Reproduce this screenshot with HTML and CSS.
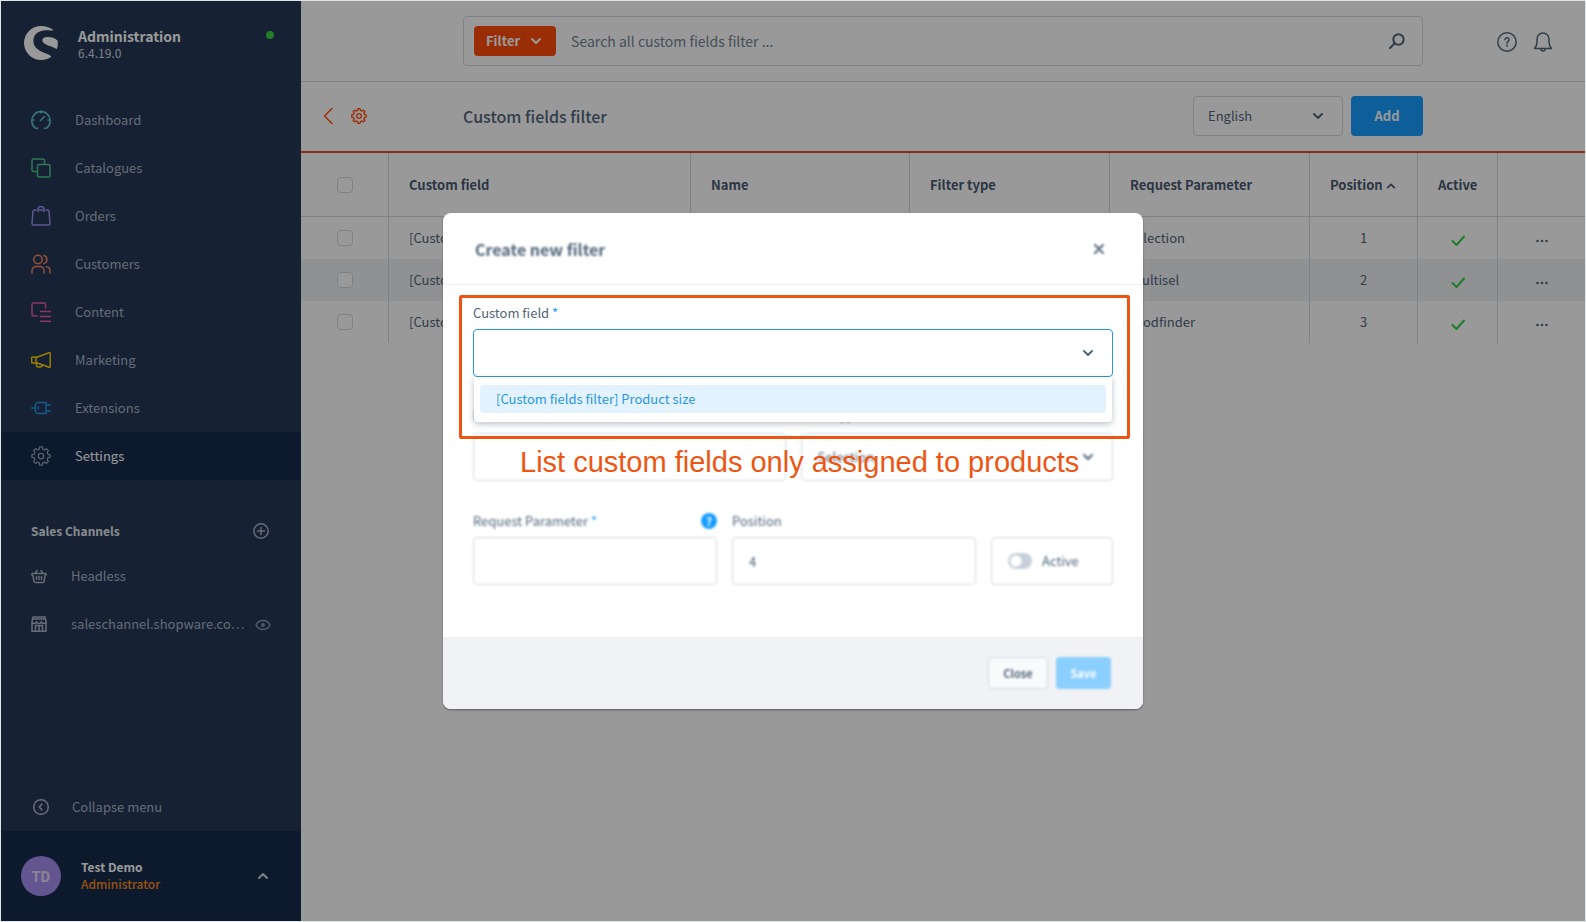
FILE: index.html
```
<!DOCTYPE html>
<html lang="en">
<head>
<meta charset="utf-8">
<title>Custom fields filter | Administration</title>
<link rel="stylesheet" href="styles.css">
</head>
<body>
<div class="app">
  <aside class="sidebar">
    <div class="brand">
      <svg class="brand-logo" viewBox="0 0 102 102" fill="currentColor"><path d="M88 12C78 4 64 0 51 0a51 51 0 0 0 0 102c12 0 22-3 30-9 2-2-3-5-9-8C52 77 28 68 28 45 28 22 50 12 66 13c9 0 20 2 22-1z"/><path d="M101 44c-9-10-23-12-33-11-10 1-14 6-13 12 3 12 29 15 42 24 4 1 5-17 4-25z"/></svg>
      <div class="brand-text"><strong class="brand-name">Administration</strong><span class="brand-version">6.4.19.0</span></div>
      <span class="status-dot"></span>
    </div>
    <nav class="nav">
      <a class="nav-item" href="#"><svg class="icon c-cyan" viewBox="0 0 20 20"><path d="M6.500 18.300H4.700A9.200 9.200 0 1 1 15.300 18.300H13.500M10 1v2M1 10h2M17 10h2M9.500 10.500L13.500 6.500"/></svg>Dashboard</a>
      <a class="nav-item" href="#"><svg class="icon c-green" viewBox="0 0 20 20"><path d="M6 13.500H2.500a1.500 1.500 0 0 1-1.500-1.500V2.500A1.500 1.500 0 0 1 2.500 1H12a1.500 1.500 0 0 1 1.500 1.500V6"/><rect x="6.500" y="6.500" width="12.500" height="12.500" rx="1.500"/></svg>Catalogues</a>
      <a class="nav-item" href="#"><svg class="icon c-purple" viewBox="0 0 20 20"><path d="M5 4H3.500a1.500 1.500 0 0 0-1.500 1.500L1 17.500A1.500 1.500 0 0 0 2.500 19h15a1.500 1.500 0 0 0 1.500-1.500L18 5.500A1.500 1.500 0 0 0 16.500 4H15M8.500 4h3M7 5.500V3.500a3 3 0 0 1 6 0v2"/></svg>Orders</a>
      <a class="nav-item" href="#"><svg class="icon c-coral" viewBox="0 0 20 20"><circle cx="7" cy="5.500" r="4.200"/><path d="M1 19v-2.500a4 4 0 0 1 4-4h4a4 4 0 0 1 4 4V19M13 1.500a4.200 4.200 0 0 1 0 8M15.500 12.700a4 4 0 0 1 3.500 4V19"/></svg>Customers</a>
      <a class="nav-item" href="#"><svg class="icon c-pink" viewBox="0 0 20 20"><path d="M6 14H2.500A1.500 1.500 0 0 1 1 12.500v-10A1.500 1.500 0 0 1 2.500 1H13a1.500 1.500 0 0 1 1.500 1.500V6M9.500 9.500H20M9.500 14.500H20M9.500 19.300H20"/></svg>Content</a>
      <a class="nav-item" href="#"><svg class="icon c-yellow" viewBox="0 0 20 20"><path d="M1.500 7H5v6H1.500a.8.8 0 0 1-.8-.8V7.800a.8.800 0 0 1 .8-.8zM5 7.500l13-4.800a1 1 0 0 1 1.300 1v12.600a1 1 0 0 1-1.300 1L5 12.500M5.500 13.300v1.700a2 2 0 0 0 2 2h1.500a2 2 0 0 0 2-2"/></svg>Marketing</a>
      <a class="nav-item" href="#"><svg class="icon c-blue" viewBox="0 0 20 20"><path d="M0 10h4.500M7 4.500h8V15.500H7A2.500 2.500 0 0 1 4.500 13V7A2.500 2.500 0 0 1 7 4.500zM15 7h4.500M15 13h4.500M7.500 9v2"/></svg>Extensions</a>
      <a class="nav-item nav-item-active" href="#"><svg class="icon c-gray" viewBox="-12 -12 24 24"><path d="M-2.060-8.250L-1.720-10.860H1.720L2.060-8.250 4.380-7.290 6.460-8.890 8.890-6.460 7.290-4.380 8.250-2.060 10.860-1.720V1.720L8.250 2.060 7.290 4.380 8.890 6.460 6.460 8.890 4.380 7.290 2.060 8.250 1.720 10.860H-1.720L-2.060 8.250-4.380 7.290-6.460 8.890-8.890 6.460-7.290 4.380-8.250 2.060-10.860 1.720V-1.720L-8.250-2.060-7.290-4.380-8.890-6.460-6.460-8.890-4.380-7.290z"/><circle r="3.300"/></svg>Settings</a>
    </nav>
    <section class="channels">
      <div class="channels-head"><h2 class="channels-title">Sales Channels</h2>
        <button class="icon-button" aria-label="Add sales channel"><svg class="icon-16" viewBox="0 0 16 16"><circle cx="8" cy="8" r="7.200"/><path d="M8 4.500v7M4.500 8h7"/></svg></button></div>
      <a class="channel" href="#"><svg class="icon-16" viewBox="0 0 16 16"><path d="M1 5.500h14M1 5.500v1.700l.9.500 1 5.600A1.500 1.500 0 0 0 4.400 14.500h7.200a1.500 1.500 0 0 0 1.500-1.200l1-5.600.9-.5V5.500M4 5.500L6 2.500M12 5.500L10 2.500M5.500 8.500v3M8 8.500v3M10.500 8.500v3"/></svg><span class="channel-name">Headless</span></a>
      <a class="channel" href="#"><svg class="icon-16" viewBox="0 0 16 16"><path d="M1 5.500L2 1h12l1 4.500M1 5.500a2.300 2 0 0 0 4.600 0 2.400 2 0 0 0 4.800 0 2.300 2 0 0 0 4.600 0M1 5.500V15.300h14V5.500M4.500 15V9.500h7V15M8 9.500V15M2 3h12"/></svg><span class="channel-name">saleschannel.shopware.co…</span><svg class="icon-16 c-dim" viewBox="0 0 16 16"><path d="M1 9c3-6 11-6 14 0-3 6-11 6-14 0z"/><circle cx="8" cy="9" r="1.200"/></svg></a>
    </section>
    <button class="collapse"><svg class="icon-16" viewBox="0 0 16 16"><circle cx="8" cy="8" r="7.300"/><path d="M9 5L6.300 8 9 11"/></svg>Collapse menu</button>
    <button class="user">
      <span class="avatar">TD</span>
      <span class="user-text"><strong class="user-name">Test Demo</strong><span class="user-role">Administrator</span></span>
      <svg class="chevron c-light" viewBox="0 0 12 12"><path d="M2 8l4-4 4 4"/></svg>
    </button>
  </aside>
  <main class="main">
    <header class="topbar">
      <div class="search">
        <button class="filter-button">Filter<svg class="chevron" viewBox="0 0 12 12"><path d="M2 4l4 4 4-4"/></svg></button>
        <input class="search-input" type="search" aria-label="Search" placeholder="Search all custom fields filter ...">
        <svg class="search-icon" viewBox="0 0 16 16"><circle cx="9.500" cy="6.500" r="5.200"/><path d="M5.800 10.200L1 15"/></svg>
      </div>
      <div class="top-actions">
        <button class="icon-button" aria-label="Help"><svg class="icon-20" viewBox="0 0 20 20"><circle cx="10" cy="10" r="9.200"/><path d="M8 7.800a2 2 0 1 1 3 1.700c-.7.4-1 .8-1 1.700M10 13v1.200"/></svg></button>
        <button class="icon-button" aria-label="Notifications"><svg class="icon-20" viewBox="0 0 20 20"><path d="M1.500 16.500C3 15 4 13 4 10V7a6 6 0 0 1 12 0v3c0 3 1 5 2.500 6.500zM8 17a2 2 0 0 0 4 0"/></svg></button>
      </div>
    </header>
    <div class="pagebar">
      <div class="page-nav">
        <a class="page-link" href="#" aria-label="Back"><svg class="icon-16" viewBox="0 0 16 16"><path d="M11 .5L3.500 8l7.500 7.500"/></svg></a>
        <a class="page-link" href="#" aria-label="Settings"><svg class="icon-16 gear-small" viewBox="-12 -12 24 24"><path d="M-2.060-8.250L-1.720-10.860H1.720L2.060-8.250 4.380-7.290 6.460-8.890 8.890-6.460 7.290-4.380 8.250-2.060 10.860-1.720V1.720L8.250 2.060 7.290 4.380 8.890 6.460 6.460 8.890 4.380 7.290 2.060 8.250 1.720 10.860H-1.720L-2.060 8.250-4.380 7.290-6.460 8.890-8.890 6.460-7.290 4.380-8.250 2.060-10.860 1.720V-1.720L-8.250-2.060-7.290-4.380-8.890-6.460-6.460-8.890-4.380-7.290z"/><circle r="3.500"/></svg></a>
      </div>
      <div class="page-head">
        <h1 class="page-title">Custom fields filter</h1>
        <div class="lang"><select class="lang-select" aria-label="Language"><option>English</option></select><svg class="chevron" viewBox="0 0 12 12"><path d="M2 4l4 4 4-4"/></svg></div>
        <button class="add-button">Add</button>
      </div>
    </div>
    <table class="grid">
      <colgroup><col class="w-check"><col><col class="w-name"><col class="w-type"><col class="w-param"><col class="w-pos"><col class="w-active"><col class="w-menu"></colgroup>
      <thead><tr><th class="center"><input class="check" type="checkbox" aria-label="Select all"></th><th>Custom field</th><th>Name</th><th>Filter type</th><th>Request Parameter</th><th>Position<svg class="sort" viewBox="0 0 12 12"><path d="M2 8l4-4 4 4"/></svg></th><th>Active</th><th></th></tr></thead>
      <tbody>
        <tr><td class="center"><input class="check" type="checkbox" aria-label="Select row 1"></td><td>[Custom fields filter]</td><td></td><td></td><td>selection</td><td class="center">1</td><td class="center"><svg class="tick" viewBox="0 0 14 14"><path d="M1.500 8l4 4L13 3.500"/></svg></td><td class="center"><button class="icon-button" aria-label="Row menu"><svg class="dots" viewBox="0 0 12 4"><circle cx="1.500" cy="2" r="1.300"/><circle cx="6" cy="2" r="1.300"/><circle cx="10.500" cy="2" r="1.300"/></svg></button></td></tr>
        <tr><td class="center"><input class="check" type="checkbox" aria-label="Select row 2"></td><td>[Custom fields filter]</td><td></td><td></td><td>multisel</td><td class="center">2</td><td class="center"><svg class="tick" viewBox="0 0 14 14"><path d="M1.500 8l4 4L13 3.500"/></svg></td><td class="center"><button class="icon-button" aria-label="Row menu"><svg class="dots" viewBox="0 0 12 4"><circle cx="1.500" cy="2" r="1.300"/><circle cx="6" cy="2" r="1.300"/><circle cx="10.500" cy="2" r="1.300"/></svg></button></td></tr>
        <tr><td class="center"><input class="check" type="checkbox" aria-label="Select row 3"></td><td>[Custom fields filter]</td><td></td><td></td><td>prodfinder</td><td class="center">3</td><td class="center"><svg class="tick" viewBox="0 0 14 14"><path d="M1.500 8l4 4L13 3.500"/></svg></td><td class="center"><button class="icon-button" aria-label="Row menu"><svg class="dots" viewBox="0 0 12 4"><circle cx="1.500" cy="2" r="1.300"/><circle cx="6" cy="2" r="1.300"/><circle cx="10.500" cy="2" r="1.300"/></svg></button></td></tr>
      </tbody>
    </table>
  </main>
</div>
<div class="backdrop">
  <div class="modal" role="dialog" aria-labelledby="modal-title">
    <header class="modal-head">
      <h2 class="modal-title soft" id="modal-title">Create new filter</h2>
      <button class="icon-button soft" aria-label="Close dialog"><svg class="close-icon" viewBox="0 0 12 12"><path d="M2 2l8 8M10 2l-8 8"/></svg></button>
    </header>
    <div class="modal-body">
      <div class="field field-open">
        <label class="label" for="custom-field">Custom field <span class="required">*</span></label>
        <div class="combo combo-focus"><input class="combo-input" id="custom-field" type="text" role="combobox" aria-expanded="true"><svg class="chevron" viewBox="0 0 12 12"><path d="M2 4l4 4 4-4"/></svg></div>
        <ul class="options" role="listbox"><li class="option" role="option" aria-selected="true">[Custom fields filter] Product size</li></ul>
      </div>
      <div class="row-half soft">
        <div class="field"><label class="label" for="name">Name <span class="required">*</span></label><input class="input" id="name" type="text"></div>
        <div class="field"><label class="label" for="type">Filter type</label><div class="combo"><select class="combo-input" id="type"><option>Selection</option></select><svg class="chevron" viewBox="0 0 12 12"><path d="M2 4l4 4 4-4"/></svg></div></div>
      </div>
      <div class="row-third soft">
        <div class="field"><div class="label-line"><label class="label" for="param">Request Parameter <span class="required">*</span></label><span class="hint">?</span></div><input class="input" id="param" type="text"></div>
        <div class="field"><label class="label" for="position">Position</label><input class="input" id="position" type="text" value="4"></div>
        <label class="switch-box"><input class="switch" type="checkbox">Active</label>
      </div>
      <div class="highlight"></div>
      <p class="callout">List custom fields only assigned to products</p>
    </div>
    <footer class="modal-foot">
      <button class="close-button soft">Close</button>
      <button class="save-button soft">Save</button>
    </footer>
  </div>
</div>
</body>
</html>
```

FILE: styles.css
```
* { box-sizing: border-box; }

body {
  margin: 0;
  height: 100vh;
  border: 1px solid #e0e5e8;
  position: relative;
  overflow: hidden;
  font: 13px/20px "Noto Sans CJK SC", "Noto Sans", sans-serif;
  color: #52667a;
}

button, input, select { font: inherit; color: inherit; margin: 0; }
button { cursor: pointer; border: 0; background: none; padding: 0; }
input, select { outline: 0; }
select { appearance: none; }
a { color: inherit; text-decoration: none; }
h1, h2, p, ul { margin: 0; padding: 0; }
svg { fill: none; stroke: currentColor; stroke-width: 1.5; stroke-linecap: round; stroke-linejoin: round; flex: none; display: block; }

.app { display: flex; height: 100%; }

/* Sidebar */
.sidebar { flex: 0 0 300px; min-width: 0; display: flex; flex-direction: column; background: #263755; color: #a9b6c6; }
.brand { display: flex; align-items: center; height: 95px; padding: 0 27px 11px 23px; gap: 20px; }
.brand-logo { width: 34px; height: 34px; fill: currentColor; stroke: none; color: #fff; }
.brand-text { display: flex; flex-direction: column; flex: 1; }
.brand-name { color: #fff; font-size: 14px; line-height: 20px; }
.brand-version { font-size: 12px; line-height: 14px; color: #d0d8e0; }
.status-dot { width: 8px; height: 8px; border-radius: 50%; background: #37d046; align-self: flex-start; margin-top: 30px; }

.nav { display: flex; flex-direction: column; }
.nav-item { display: flex; align-items: center; gap: 24px; height: 48px; padding: 0 30px; }
.nav-item-active { background: #172b4b; color: #fff; }
.icon, .icon-20 { width: 20px; height: 20px; }
.icon-16 { width: 16px; height: 16px; }
.c-cyan { color: #65c5e0; }
.c-green { color: #4bc78e; }
.c-purple { color: #a092f0; }
.c-coral { color: #f88962; }
.c-pink { color: #ee59b4; }
.c-yellow { color: #ffd500; }
.c-blue { color: #1e97e8; }
.c-gray { color: #96a5b5; }
.c-dim { color: #8b9bad; }
.c-light { color: #d1d9e0; }

.channels { flex: 1; padding: 31px 30px 0; }
.channels-head { display: flex; align-items: center; justify-content: space-between; height: 40px; padding-right: 2px; }
.channels-title { font-size: 12px; line-height: 20px; color: #e3e8ed; }
.channel { display: flex; align-items: center; height: 48px; gap: 24px; }
.channels-head + .channel { margin-top: 1px; }
.channel-name { flex: 1; min-width: 0; white-space: nowrap; }
.channel .c-dim { margin-left: -14px; }
.collapse { display: flex; align-items: center; gap: 23px; height: 48px; padding: 0 32px; }
.user { display: flex; align-items: center; gap: 20px; height: 90px; padding: 0 32px 0 20px; background: #172b4b; text-align: left; }
.avatar { width: 40px; height: 40px; border-radius: 50%; background: #a68ff0; color: #e3dff5; font-weight: 700; font-size: 14px; line-height: 40px; text-align: center; }
.user-text { display: flex; flex-direction: column; flex: 1; padding-bottom: 2px; font-size: 12px; line-height: 17px; }
.user-name { color: #fff; }
.user-role { color: #f88c1e; font-weight: 500; }

.chevron { width: 12px; height: 12px; stroke-width: 2; }
.icon-button { display: inline-flex; color: inherit; }

/* Header */
.main { flex: 1; min-width: 0; background: #fff; }
.topbar, .pagebar { display: grid; grid-template-columns: 1fr minmax(0, 960px) 1fr; align-items: center; }
.topbar { height: 81px; border-bottom: 1px solid #d1d9e0; }
.search { grid-column: 2; display: flex; align-items: center; height: 50px; padding: 0 17px 0 10px; border: 1px solid #d1d9e0; border-radius: 4px; }
.filter-button { display: flex; align-items: center; gap: 10px; height: 30px; padding: 0 14px 0 12px; border-radius: 4px; background: #ff4e0a; color: #fff; font-weight: 700; }
.search-input { flex: 1; min-width: 0; border: 0; background: none; padding: 0 15px; font-size: 14px; }
.search-input::placeholder { color: #758496; opacity: 1; }
.search-icon { width: 16px; height: 16px; stroke-width: 2; }
.top-actions { display: flex; justify-content: flex-end; gap: 16px; padding: 2px 32px 0 0; }

.pagebar { height: 71px; padding-bottom: 2px; border-bottom: 2px solid #e2511f; }
.page-nav { display: flex; gap: 14px; padding-left: 20px; color: #ff4e0a; }
.gear-small { stroke-width: 2; }
.page-head { display: flex; align-items: center; gap: 8px; }
.page-title { flex: 1; font-size: 16px; line-height: 24px; font-weight: 500; color: #52667a; }
.lang { display: flex; align-items: center; width: 150px; height: 40px; border: 1px solid #d1d9e0; border-radius: 4px; padding-right: 18px; }
.lang-select { flex: 1; border: 0; background: none; padding: 0 14px; height: 100%; }
.add-button { width: 72px; height: 40px; border-radius: 4px; background: #189eff; color: #fff; font-weight: 700; }

/* Data grid */
.grid { width: 100%; table-layout: fixed; border-collapse: separate; border-spacing: 0; }
.w-check { width: 88px; }
.w-menu { width: 87px; }
.w-name { width: 219px; }
.w-type, .w-param { width: 200px; }
.w-pos { width: 108px; }
.w-active { width: 80px; }
.grid th { height: 64px; padding: 0 0 0 20px; text-align: left; border-bottom: 1px solid #d1d9e0; border-right: 1px solid #d1d9e0; color: #4a5b70; white-space: nowrap; }
.grid td { height: 42px; padding: 0 0 0 20px; white-space: nowrap; border-right: 1px solid #d1d9e0; }
.grid th:last-child, .grid td:last-child { border-right: 0; }
.grid .center { text-align: center; padding: 0; }
.grid tbody tr:nth-child(even) { background: #f0f2f5; }
.check { appearance: none; width: 16px; height: 16px; border: 1px solid #d1d9e0; border-radius: 4px; background: #fff; display: block; margin: 0 auto; }
.sort { display: inline-block; width: 10px; height: 10px; margin-left: 3px; stroke-width: 2; vertical-align: middle; }
.tick { width: 14px; height: 14px; margin: 4px auto 0; color: #37d046; stroke-width: 2; }
.dots { width: 12px; height: 4px; fill: currentColor; stroke: none; margin-bottom: 4px; }

/* Modal */
.backdrop { position: absolute; inset: 0; display: flex; align-items: center; justify-content: center; background: rgba(0, 0, 0, .4); }
.modal { width: 700px; border-radius: 8px; background: #fff; overflow: hidden; box-shadow: 0 1px 2px rgba(0, 0, 0, .4); }
.soft { filter: blur(1px); }
.modal-head { display: flex; align-items: center; justify-content: space-between; height: 72px; padding: 0 38px 0 32px; border-bottom: 1px solid #eceff2; }
.modal-title { font-size: 16px; line-height: 24px; }
.close-icon { width: 12px; height: 12px; stroke-width: 2; }
.modal-body { position: relative; display: flex; flex-direction: column; gap: 28px; padding: 16px 30px 52px; }
.field { position: relative; display: flex; flex-direction: column; gap: 4px; min-width: 0; }
.field-open { z-index: 1; }
.label { line-height: 24px; }
.required { color: #189eff; }
.label-line { display: flex; align-items: center; justify-content: space-between; }
.hint { width: 16px; height: 16px; border-radius: 50%; background: #189eff; color: #fff; font-size: 11px; line-height: 16px; font-weight: 700; text-align: center; }
.input, .combo { height: 48px; width: 100%; border: 1px solid #d1d9e0; border-radius: 4px; background: #fff; }
.input { padding: 0 16px; }
.combo { display: flex; align-items: center; padding-right: 18px; }
.combo-focus { border-color: #2b97e4; }
.combo-input { flex: 1; min-width: 0; height: 100%; border: 0; background: none; padding: 0 16px; }
.options { position: absolute; top: 100%; left: 1px; right: 1px; padding: 8px 6px 9px; list-style: none; background: #fff; border-radius: 0 0 4px 4px; box-shadow: 0 2px 6px rgba(82, 102, 122, .4); }
.option { padding: 0 16px; line-height: 28px; border-radius: 4px; background: #e2f3ff; color: #2b97e4; }
.row-half { display: grid; grid-template-columns: 1fr 1fr; gap: 15px; }
.row-half .label { line-height: 20px; }
.row-half .field { gap: 8px; }
.row-third { display: grid; grid-template-columns: 2fr 2fr 1fr; align-items: end; gap: 15px; }
.switch-box { display: flex; align-items: center; gap: 10px; height: 48px; padding: 0 16px; border: 1px solid #d1d9e0; border-radius: 4px; }
.switch { appearance: none; width: 24px; height: 16px; border-radius: 8px; background: radial-gradient(circle at 8px 8px, #fff 5px, #c8d1db 6px); }
.highlight { position: absolute; z-index: 2; top: 10px; left: 16px; right: 13px; height: 144px; border: 3px solid #ee5512; border-radius: 2px; }
.callout { position: absolute; z-index: 2; top: 160px; left: 77px; font: 29px/34px "Liberation Sans", Arial, sans-serif; color: #ee5512; white-space: nowrap; }
.modal-foot { display: flex; align-items: center; justify-content: flex-end; gap: 8px; height: 72px; padding: 0 32px; background: #f0f2f5; }
.close-button, .save-button { height: 32px; border-radius: 4px; font-size: 11px; font-weight: 700; }
.close-button { width: 60px; border: 1px solid #d1d9e0; background: #f9fafb; }
.save-button { width: 55px; background: #8bcfff; color: #fff; }
```
